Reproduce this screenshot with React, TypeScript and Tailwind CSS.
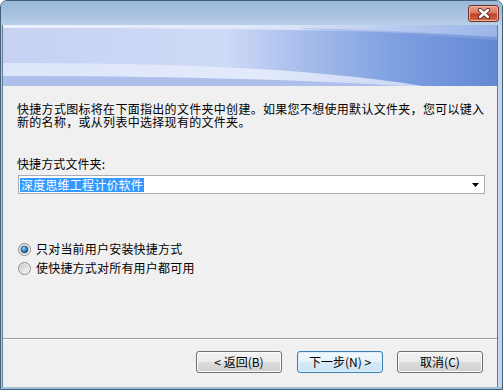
import React from "react";

function Radio({ checked }: { checked: boolean }) {
  return (
    <svg width="13" height="13" viewBox="0 0 13 13" className="shrink-0">
      <defs>
        <linearGradient id={checked ? "rb1" : "rb2"} x1="0" y1="0" x2="1" y2="1">
          <stop offset="0" stopColor="#d8d8d8" />
          <stop offset="1" stopColor="#ffffff" />
        </linearGradient>
        <radialGradient id="rdot" cx="0.4" cy="0.35" r="0.7">
          <stop offset="0" stopColor="#a6d3f4" />
          <stop offset="0.5" stopColor="#3d7fb8" />
          <stop offset="1" stopColor="#1b4a72" />
        </radialGradient>
        <radialGradient id="rgray" cx="0.6" cy="0.65" r="0.7">
          <stop offset="0" stopColor="#f4f4f4" />
          <stop offset="1" stopColor="#c9c9c9" />
        </radialGradient>
      </defs>
      <circle cx="6.5" cy="6.5" r="6" fill={`url(#${checked ? "rb1" : "rb2"})`} stroke="#8a8a8a" strokeWidth="1" />
      {checked ? (
        <circle cx="6.5" cy="6.5" r="3.6" fill="url(#rdot)" stroke="#1e4d78" strokeWidth="0.6" />
      ) : (
        <circle cx="6.5" cy="6.5" r="4" fill="url(#rgray)" />
      )}
    </svg>
  );
}

function Button({ children, def }: { children: React.ReactNode; def?: boolean }) {
  return (
    <div
      className={
        def
          ? "w-[86px] h-[22px] flex items-center justify-center rounded-[3px] border border-[#3c7fb1] bg-[linear-gradient(#f3f9fd_0%,#e6f2fa_50%,#d6eaf7_50%,#cde4f4_100%)] shadow-[inset_0_0_0_1px_#d9eefa] text-[12px] text-black"
          : "w-[86px] h-[22px] flex items-center justify-center rounded-[3px] border border-[#707070] bg-[linear-gradient(#f2f2f2_0%,#ebebeb_50%,#dddddd_50%,#cfcfcf_100%)] shadow-[inset_0_0_0_1px_#fbfbfb] text-[12px] text-black"
      }
    >
      {children}
    </div>
  );
}

export default function App() {
  return (
    <div className="w-[503px] h-[390px] flex flex-col overflow-hidden rounded-t-[7px] border border-[#40607e] bg-[linear-gradient(90deg,#b4cbe4,#c3d6ea)] font-[family-name:'Noto_Sans_CJK_SC','Noto_Sans',sans-serif] text-black">
      {/* title bar */}
      <div className="h-[24px] shrink-0 flex justify-end items-start bg-[linear-gradient(#9ab7d9,#aac3e0_60%,#b8cfe8)]">
        <div className="mt-[4px] mr-[3px] w-[31px] h-[17px] rounded-[3px] border border-[#6e2e22] bg-[linear-gradient(#e6a18d_0%,#d9785f_45%,#c2422a_55%,#d06a45_100%)] shadow-[inset_0_0_0_1px_#eeb29e] flex items-center justify-center">
          <svg width="14" height="11" viewBox="0 0 14 11">
            <path d="M3 2 L11 9 M11 2 L3 9" stroke="#5a2a22" strokeWidth="4.2" strokeLinecap="round" />
            <path d="M3 2 L11 9 M11 2 L3 9" stroke="#ffffff" strokeWidth="2.4" strokeLinecap="round" />
          </svg>
        </div>
      </div>

      {/* body */}
      <div className="flex-1 flex flex-col ml-[1px] mr-[4px] border-l border-r border-[#6b7b8c]">
        {/* banner */}
        <div className="h-[61px] shrink-0">
          <svg width="494" height="61" viewBox="0 0 494 61" preserveAspectRatio="none" className="block">
            <defs>
              <linearGradient id="bg" x1="0" y1="0" x2="1" y2="0">
                <stop offset="0" stopColor="#c6d2f3" />
                <stop offset="0.45" stopColor="#cfdaf6" />
                <stop offset="0.58" stopColor="#adc2ed" />
                <stop offset="0.8" stopColor="#7d9ee0" />
                <stop offset="1" stopColor="#6489d4" />
              </linearGradient>
              <linearGradient id="lw" x1="0" y1="0" x2="1" y2="0">
                <stop offset="0" stopColor="#dde5fa" />
                <stop offset="0.6" stopColor="#e3eafb" />
                <stop offset="1" stopColor="#c9d6f4" />
              </linearGradient>
              <linearGradient id="tw" x1="0" y1="0" x2="1" y2="0">
                <stop offset="0" stopColor="#eef3fd" stopOpacity="0.95" />
                <stop offset="0.6" stopColor="#e6edfb" stopOpacity="0.75" />
                <stop offset="1" stopColor="#a9c0ec" stopOpacity="0.8" />
              </linearGradient>
            </defs>
            <rect x="0" y="0" width="494" height="61" fill="url(#bg)" />
            <path d="M0 0 L494 0 L494 12 C400 6 250 3 0 3 Z" fill="url(#tw)" />
            <path d="M300 3 C380 5 440 8 494 12 L494 15 C430 11 370 7 300 4 Z" fill="#8fa9e2" opacity="0.5" />
            <path d="M0 38 C160 38 300 42 420 61 L0 61 Z" fill="url(#lw)" />
            <path d="M0 51 C150 51 290 54 400 61 L0 61 Z" fill="#aebfec" />
          </svg>
        </div>

        {/* content */}
        <div className="flex-1 flex flex-col bg-[#f0f0f0]">
          <div className="flex flex-col pl-[14px]">
            <div className="mt-[16px] flex flex-col text-[12px] tracking-[0.3px] whitespace-nowrap">
              <p className="h-[13px] leading-[13px]">快捷方式图标将在下面指出的文件夹中创建。如果您不想使用默认文件夹，您可以键入</p>
              <p className="h-[13px] leading-[13px]">新的名称，或从列表中选择现有的文件夹。</p>
            </div>
            <p className="mt-[30px] text-[12px] leading-[12px] tracking-[0.1px]">快捷方式文件夹:</p>
            <div className="mt-[5px] ml-[1px] w-[467px] h-[19px] bg-white border border-[#a5acb5] flex items-center pl-[1px]">
              <span className="bg-[#3399ff] text-white text-[12px] leading-[14px] tracking-[0.2px] px-[1px]">
                深度思维工程计价软件
              </span>
              <svg width="7" height="4" viewBox="0 0 7 4" className="ml-auto mr-[5px]">
                <path d="M0 0 L7 0 L3.5 4 Z" fill="#000" />
              </svg>
            </div>
            <div className="mt-[47px] h-[16px] flex items-center gap-[5px] ml-[1px]">
              <Radio checked />
              <span className="text-[12px] leading-[12px] tracking-[0.2px]">只对当前用户安装快捷方式</span>
            </div>
            <div className="mt-[3px] h-[16px] flex items-center gap-[5px] ml-[1px]">
              <Radio checked={false} />
              <span className="text-[12px] leading-[12px] tracking-[0.2px]">使快捷方式对所有用户都可用</span>
            </div>
          </div>
          <div className="flex-1" />
          <div className="h-[2px] border-t border-[#a0a0a0] border-b border-b-white" />
          <div className="flex justify-end pr-[14px] pt-[11px] pb-[14px]">
            <div className="mr-[15px]">
              <Button>&lt; 返回(B)</Button>
            </div>
            <div className="mr-[14px]">
              <Button def>下一步(N) &gt;</Button>
            </div>
            <Button>取消(C)</Button>
          </div>
        </div>
      </div>

      {/* bottom frame */}
      <div className="h-[2px] shrink-0 bg-[#9cc1d6]" />
    </div>
  );
}
